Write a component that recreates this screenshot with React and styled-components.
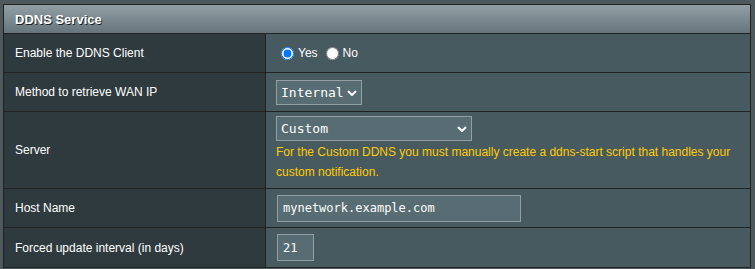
import React, { useState } from "react";
import styled, { createGlobalStyle } from "styled-components";

const GlobalStyle = createGlobalStyle`
  html, body {
    margin: 0;
    padding: 0;
    background: #4d595d;
  }
  body {
    font-family: "Liberation Sans", Arial, sans-serif;
  }
`;

const Page = styled.div`
  padding: 4px 4px 0 3px;
`;

const FormTable = styled.div`
  width: 748px;
  box-sizing: border-box;
  border: 1px solid #222;
  border-bottom: none;
`;

const Header = styled.div`
  display: flex;
  align-items: center;
  height: 28px;
  padding-left: 11px;
  background: linear-gradient(to bottom, #92a0a5 0%, #66757c 100%);
  border-bottom: 1px solid #222;
  color: #fff;
  font-size: 13px;
  font-weight: bold;
  text-shadow: 1px 1px 0 #1c2326;
`;

const Row = styled.div`
  display: grid;
  grid-template-columns: 262px 1fr;
  min-height: ${(p) => p.height}px;
  border-bottom: 1px solid #222;
`;

const Label = styled.div`
  display: flex;
  align-items: center;
  padding-left: 11px;
  background: #2f3a3e;
  border-right: 1px solid #222;
  color: #fff;
  font-size: 12px;
`;

const Value = styled.div`
  display: flex;
  flex-direction: column;
  justify-content: center;
  align-items: flex-start;
  padding: ${(p) => (p.tall ? "3px 10px 5px" : "0 10px")};
  background: #475a5f;
`;

const RadioGroup = styled.div`
  display: flex;
  align-items: center;
  color: #fff;
  font-size: 12px;
`;

const RadioLabel = styled.label`
  display: flex;
  align-items: center;
  margin-right: 3px;

  input {
    margin: 0 4px 0 5px;
    width: 13px;
    height: 13px;
  }
`;

const SelectWrap = styled.div`
  position: relative;
  width: ${(p) => p.width}px;
  height: 25px;
`;

const Select = styled.select`
  appearance: none;
  width: 100%;
  height: 100%;
  box-sizing: border-box;
  padding: 0 0 0 4px;
  background: #576d73;
  border: 1px solid #929ea1;
  border-radius: 0;
  color: #fff;
  font-family: "DejaVu Sans Mono", "Liberation Mono", monospace;
  font-size: 13px;
  outline: none;
`;

const Chevron = styled.svg`
  position: absolute;
  right: 5px;
  top: 10px;
  pointer-events: none;
`;

const Hint = styled.div`
  color: #ffcc00;
  font-size: 12px;
  line-height: 20px;
  margin-top: 1px;
`;

const TextInput = styled.input`
  width: ${(p) => p.width}px;
  height: 27px;
  box-sizing: border-box;
  margin-left: 1px;
  padding: 0 0 0 5px;
  background: #576d73;
  border: 1px solid #929ea1;
  color: #fff;
  font-family: "DejaVu Sans Mono", "Liberation Mono", monospace;
  font-size: 12px;
  outline: none;
`;

const DropDown = ({ width, value, options }) => (
  <SelectWrap width={width}>
    <Select defaultValue={value}>
      {options.map((o) => (
        <option key={o}>{o}</option>
      ))}
    </Select>
    <Chevron width="10" height="6" viewBox="0 0 10 6">
      <polyline
        points="1,1 5,5 9,1"
        fill="none"
        stroke="#fff"
        strokeWidth="2"
      />
    </Chevron>
  </SelectWrap>
);

const App = () => {
  const [enabled, setEnabled] = useState(true);

  return (
    <Page>
      <GlobalStyle />
      <FormTable>
        <Header>DDNS Service</Header>
        <Row height={38}>
          <Label>Enable the DDNS Client</Label>
          <Value>
            <RadioGroup>
              <RadioLabel>
                <input
                  type="radio"
                  name="ddns"
                  checked={enabled}
                  onChange={() => setEnabled(true)}
                />
                Yes
              </RadioLabel>
              <RadioLabel>
                <input
                  type="radio"
                  name="ddns"
                  checked={!enabled}
                  onChange={() => setEnabled(false)}
                />
                No
              </RadioLabel>
            </RadioGroup>
          </Value>
        </Row>
        <Row height={38}>
          <Label>Method to retrieve WAN IP</Label>
          <Value>
            <DropDown width={86} value="Internal" options={["Internal", "External"]} />
          </Value>
        </Row>
        <Row height={76}>
          <Label>Server</Label>
          <Value tall>
            <DropDown width={196} value="Custom" options={["Custom", "WWW.ASUS.COM"]} />
            <Hint>
              For the Custom DDNS you must manually create a ddns-start script
              that handles your custom notification.
            </Hint>
          </Value>
        </Row>
        <Row height={38}>
          <Label>Host Name</Label>
          <Value>
            <TextInput width={244} defaultValue="mynetwork.example.com" />
          </Value>
        </Row>
        <Row height={39}>
          <Label>Forced update interval (in days)</Label>
          <Value>
            <TextInput width={37} defaultValue="21" />
          </Value>
        </Row>
      </FormTable>
    </Page>
  );
};

export default App;
